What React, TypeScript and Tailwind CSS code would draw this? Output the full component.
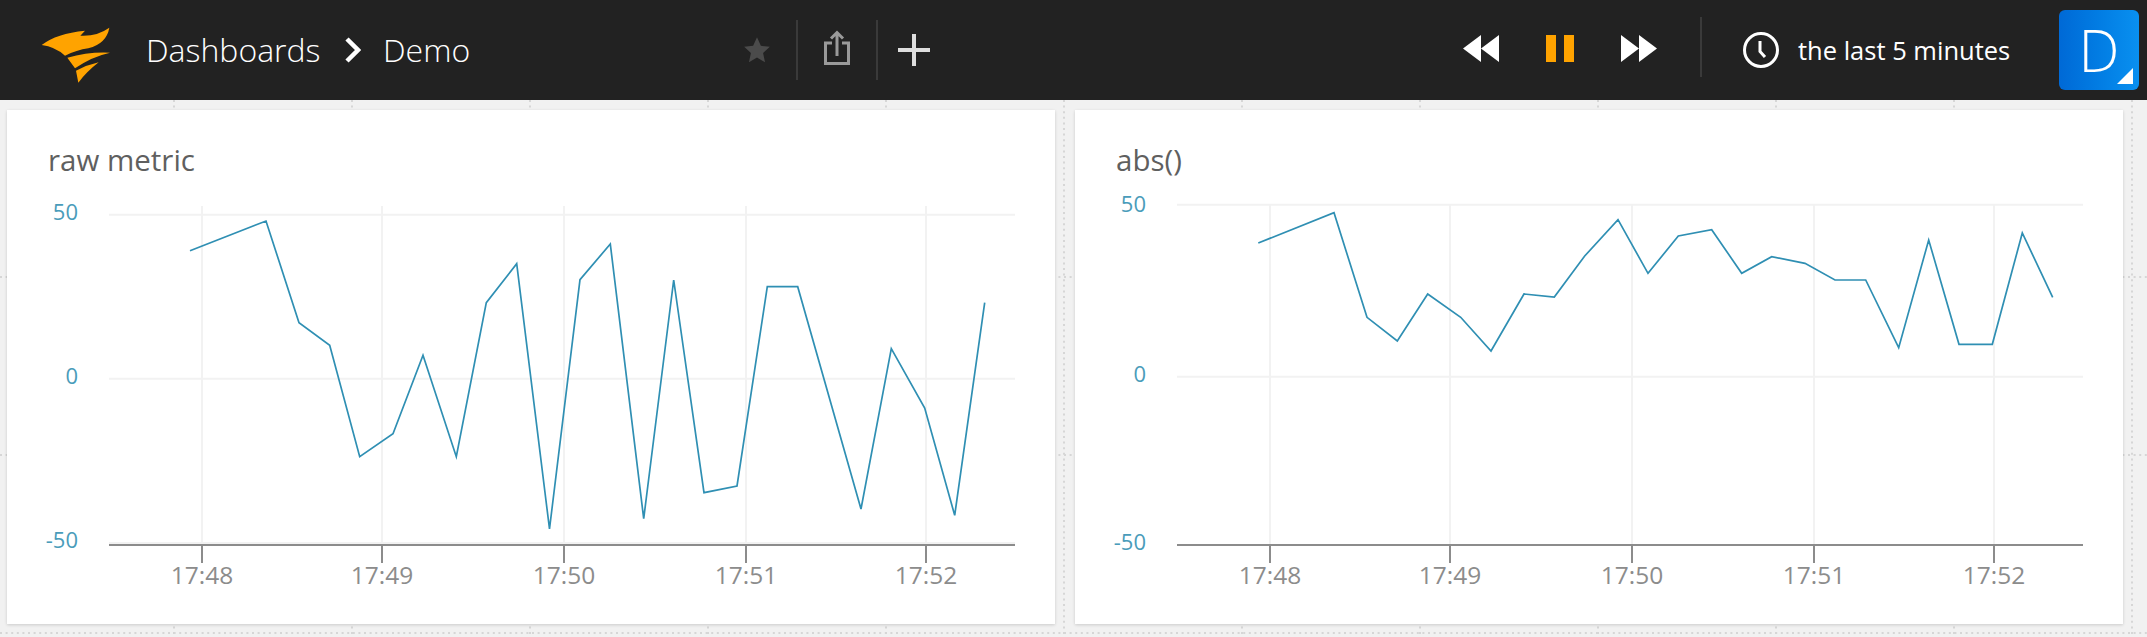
import React from 'react';

interface ChartProps {
  title: string;
  left: number;
  gridY: number[];
  labelY: number[];
  gridX: number[];
  plotStart: number;
  plotEnd: number;
  labelEnd: number;
  points: string;
}

const TICK_LABELS = ['17:48', '17:49', '17:50', '17:51', '17:52'];
const VALUE_LABELS = ['50', '0', '-50'];

const RAW_POINTS =
  '190,250.7 266,221 299,322.7 329.7,345.3 359.7,456.7 393,433.7 423,355.3 456.3,456.7 486.3,302.7 516.7,263.7 549.5,529 580,279.7 610.3,244 643.7,518.7 673.7,280 704,492.7 737,486 767.3,286.7 797.7,286.7 861,509 891.3,348.7 924.7,408 954.7,515.3 984.7,302.7';

const ABS_POINTS =
  '1258.3,243 1334,212.7 1367,317.3 1397.3,341 1427.7,294 1460.7,317.3 1491,351 1524,294 1554.3,297 1584.7,256 1618,219.7 1648,273.3 1678.3,236 1711.7,229.7 1741.7,273.3 1771.7,256.7 1805,263.3 1835,280 1865.7,280 1898.7,347.7 1928.7,240 1959,344.3 1992.3,344.3 2022.3,233 2052.7,297.3';

const Logo = () => (
  <svg width="110" height="70" viewBox="0 0 330 210" className="shrink-0" fill="#ffa300">
    <path d="M65 90Q110 55 195 47L181 62Q230 65 268 38Q260 85 205 100Q170 105 135 122Q105 95 65 90Z" />
    <path d="M142 128Q205 110 270 113Q215 125 165 160Z" />
    <path d="M168 167Q200 150 236 142Q200 170 175 203Z" />
  </svg>
);

const Divider = ({ className }: { className: string }) => (
  <div className={`w-[2px] shrink-0 bg-[#3a3a3a] ${className}`} />
);

const Header = () => (
  <header className="flex h-[100px] items-center bg-[#222222] pl-[20px] text-white">
    <Logo />
    <div className="ml-[16px] flex w-[597px] shrink-0 items-center text-[32px] font-light">
      <span className="w-[199px]">Dashboards</span>
      <svg width="16" height="26" viewBox="0 0 16 26" fill="none" stroke="#fff" strokeWidth="4.5">
        <path d="M2 2L13 13L2 24" />
      </svg>
      <span className="ml-[22px]">Demo</span>
    </div>
    <svg width="28" height="28" viewBox="0 0 24 24" fill="#4b4b4b" className="shrink-0">
      <path d="M12 1l3.3 7.4 7.7.8-5.8 5.3 1.7 8L12 18.400l-6.900 4.100 1.700-8L1 9.200l7.700-.8z" />
    </svg>
    <Divider className="ml-[25px] h-[60px]" />
    <svg width="28" height="36" viewBox="0 0 28 36" fill="none" stroke="#9a9a9a" strokeWidth="3" className="ml-[25px] mb-[4px] shrink-0">
      <path d="M9 13H2.500V33.500H25.500V13H19" />
      <path d="M14 26V3M8 8.500L14 2.500L20 8.500" />
    </svg>
    <Divider className="ml-[25px] h-[60px]" />
    <svg width="32" height="32" viewBox="0 0 32 32" fill="#dedede" className="ml-[20px] shrink-0">
      <path d="M14 0h4v14h14v4H18v14h-4V18H0v-4h14z" />
    </svg>

    <svg width="36" height="27" viewBox="0 0 36 27" fill="#fff" className="ml-[533px] mb-[3px] shrink-0">
      <path d="M18 0V27L0 13.500ZM36 0V27L18 13.500Z" />
    </svg>
    <div className="ml-[47px] mb-[3px] flex h-[27px] shrink-0 gap-[8px]">
      <div className="w-[10px] bg-[#ffa300]" />
      <div className="w-[10px] bg-[#ffa300]" />
    </div>
    <svg width="36" height="27" viewBox="0 0 36 27" fill="#fff" className="ml-[47px] mb-[3px] shrink-0">
      <path d="M0 0V27L18 13.500ZM18 0V27L36 13.500Z" />
    </svg>
    <Divider className="ml-[43px] mb-[6px] h-[60px]" />
    <svg width="36" height="36" viewBox="0 0 36 36" fill="none" stroke="#fff" className="ml-[41px] shrink-0">
      <circle cx="18" cy="18" r="16.500" strokeWidth="3" />
      <path d="M17 9V19.500L22 25" strokeWidth="3" />
    </svg>
    <span className="ml-[19px] w-[261px] shrink-0 text-[25.5px] font-medium">the last 5 minutes</span>
    <div className="relative flex h-[80px] w-[80px] shrink-0 items-center justify-center rounded-[6px] bg-gradient-to-r from-[#0069d6] to-[#0a90f0] text-[58px] leading-none font-light">
      D
      <div className="absolute right-[6px] bottom-[6px] h-0 w-0 border-b-[16px] border-l-[16px] border-b-white border-l-transparent" />
    </div>
  </header>
);

const Chart = ({ title, left, gridY, labelY, gridX, plotStart, plotEnd, labelEnd, points }: ChartProps) => (
  <section className="w-[1048px] shrink-0 bg-white shadow-[0_1px_3px_rgba(0,0,0,0.16)]">
    <h2 className="h-[80px] pt-[32px] pl-[41px] text-[29.5px] leading-[36px] text-[#5f5f5f]">{title}</h2>
    <svg width="1048" height="434" viewBox={`${left} 190 1048 434`} className="block">
      {gridY.map((y) => (
        <line key={y} x1={plotStart} x2={plotEnd} y1={y} y2={y} stroke="#f2f2f2" strokeWidth="2" />
      ))}
      {gridX.map((x) => (
        <line key={x} x1={x} x2={x} y1={gridY[0] - 9 < 204 ? 204 : 206} y2="545" stroke="#f2f2f2" strokeWidth="2" />
      ))}
      <line x1={plotStart} x2={plotEnd} y1="545" y2="545" stroke="#8c8c8c" strokeWidth="2" />
      {gridX.map((x, i) => (
        <g key={x}>
          <line x1={x} x2={x} y1="545" y2="563" stroke="#8c8c8c" strokeWidth="2" />
          <text x={x} y="583.500" textAnchor="middle" fontSize="24.500" fill="#8c8c8c">
            {TICK_LABELS[i]}
          </text>
        </g>
      ))}
      {labelY.map((y, i) => (
        <text key={y} x={labelEnd} y={y + 8} textAnchor="end" fontSize="22" fill="#4a9cba">
          {VALUE_LABELS[i]}
        </text>
      ))}
      <polyline points={points} fill="none" stroke="#2f8fb3" strokeWidth="1.700" />
    </svg>
  </section>
);

// dotted layout grid of the dashboard, visible in the gaps between the cards
const DotGrid = () => {
  const xs = [-4, 174, 352, 530, 708, 886, 1064, 1242, 1420, 1598, 1776, 1954, 2132];
  const ys = [99, 277, 455, 633];
  return (
    <svg width="2147" height="637" className="absolute top-0 left-0" stroke="#d6d6d6" strokeWidth="2" strokeDasharray="2 3.600">
      {xs.map((x) => (
        <line key={x} x1={x} x2={x} y1="100" y2="637" />
      ))}
      {ys.map((y) => (
        <line key={y} x1="0" x2="2147" y1={y} y2={y} />
      ))}
    </svg>
  );
};

export default function App() {
  return (
    <div className="relative h-[637px] w-[2147px] overflow-hidden bg-[#f1f1f1] font-['Open_Sans',sans-serif]">
      <DotGrid />
      <div className="relative">
        <Header />
        <main className="mt-[10px] flex h-[514px] gap-[20px] pl-[7px]">
          <Chart
            title="raw metric"
            left={7}
            gridY={[214.7, 378.7, 543]}
            labelY={[212, 376, 540]}
            gridX={[202, 382, 564, 746, 926]}
            plotStart={109}
            plotEnd={1015}
            labelEnd={78}
            points={RAW_POINTS}
          />
          <Chart
            title="abs()"
            left={1075}
            gridY={[204.7, 376.7]}
            labelY={[204, 374, 542]}
            gridX={[1270, 1450, 1632, 1814, 1994]}
            plotStart={1177}
            plotEnd={2083}
            labelEnd={1146}
            points={ABS_POINTS}
          />
        </main>
      </div>
    </div>
  );
}
